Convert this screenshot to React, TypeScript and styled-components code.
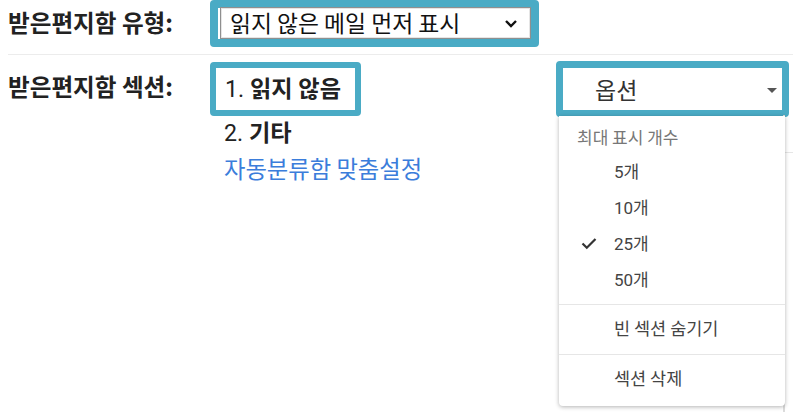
import React from "react";
import styled, { createGlobalStyle } from "styled-components";

const GlobalStyle = createGlobalStyle`
  html, body { margin: 0; padding: 0; background: #fff; }
  body { font-family: Roboto, "Noto Sans CJK KR", sans-serif; color: #222; }
  * { box-sizing: border-box; }
`;

const TEAL = "#4aabc5";

const Page = styled.div`
  width: 793px;
  height: 412px;
  padding-left: 8px;
  overflow: hidden;
  position: relative;
`;

const Row = styled.div<{ $h: number }>`
  display: flex;
  align-items: flex-start;
  min-height: ${(p) => p.$h}px;
`;

const Label = styled.div<{ $top: number }>`
  width: 202px;
  flex: none;
  padding-top: ${(p) => p.$top}px;
  font-family: "Noto Sans CJK KR", sans-serif;
  font-weight: 700;
  font-size: 23.6px;
  line-height: 24px;
  color: #222;
`;

const Highlight = styled.div<{ $b: number }>`
  border: ${(p) => p.$b}px solid ${TEAL};
  border-radius: 4px;
  background: #fff;
`;

const FakeSelect = styled.div`
  width: 311px;
  height: 32px;
  margin: -1px 0 0 2px;
  border: 1px solid #8f8f8f;
  box-shadow: inset 0 0 0 1px #e5e5e5;
  display: flex;
  align-items: center;
  justify-content: space-between;
  padding: 0 12px 0 9px;
  font-family: "Noto Sans CJK KR", sans-serif;
  font-size: 22.8px;
  line-height: 28px;
  color: #111;
`;

const Divider = styled.div`
  height: 1px;
  background: #ececec;
  margin: 7px 0 7px;
`;

const Sections = styled.div`
  flex: 1;
  display: flex;
  flex-direction: column;
  align-items: flex-start;
`;

const SectionItem = styled.div<{ $indent?: number; $mt?: number }>`
  font-family: Roboto, "Noto Sans CJK KR", sans-serif;
  font-size: 23.2px;
  line-height: 26px;
  color: #222;
  padding-left: ${(p) => p.$indent ?? 9}px;
  margin-top: ${(p) => p.$mt ?? 0}px;
  b { font-weight: 700; }
`;

const BoxedItem = styled(SectionItem)`
  padding: 8px 14px 8px 9px;
`;

const LinkText = styled.a`
  font-family: "Noto Sans CJK KR", sans-serif;
  font-size: 23.3px;
  line-height: 26px;
  color: #3b7ddb;
  text-decoration: none;
  padding-left: 14px;
  margin-top: 9px;
`;

const OptionsWrap = styled.div`
  position: relative;
  width: 233px;
  margin-right: 4px;
  flex: none;
  margin-top: -1px;
`;

const OptionsButton = styled.div`
  height: 56px;
  border: 7px solid ${TEAL};
  border-radius: 4px;
  display: flex;
  align-items: center;
  justify-content: space-between;
  padding: 0 5px 0 32px;
  font-family: "Noto Sans CJK KR", sans-serif;
  font-size: 23px;
  color: #333;
`;

const Caret = styled.span`
  width: 0;
  height: 0;
  border-left: 5px solid transparent;
  border-right: 5px solid transparent;
  border-top: 5px solid #555;
  margin-top: 2px;
`;

const Menu = styled.div`
  position: absolute;
  top: 55px;
  left: 3px;
  width: 226px;
  height: 290px;
  background: #fff;
  border-radius: 0 0 4px 4px;
  box-shadow: 0 1px 4px rgba(0, 0, 0, 0.3);
  padding-top: 8px;
  z-index: 2;
`;

const MenuHeader = styled.div`
  font-family: "Noto Sans CJK KR", sans-serif;
  font-size: 17px;
  line-height: 26px;
  color: #777;
  padding-left: 18px;
  margin-bottom: 4px;
`;

const MenuItem = styled.div`
  position: relative;
  font-family: Roboto, "Noto Sans CJK KR", sans-serif;
  font-size: 17px;
  height: 36px;
  line-height: 36px;
  color: #444;
  padding-left: 55px;
`;

const Check = styled.svg`
  position: absolute;
  left: 22px;
  top: 11px;
`;

const MenuSep = styled.div<{ $mt: number }>`
  height: 1px;
  background: #e6e6e6;
  margin-top: ${(p) => p.$mt}px;
`;

const MenuAction = styled.div`
  font-family: "Noto Sans CJK KR", sans-serif;
  font-size: 17.5px;
  height: 49px;
  line-height: 46px;
  color: #444;
  padding-left: 55px;
`;

const BackLine = styled.div`
  position: absolute;
  right: 8px;
  top: 115px;
  width: 2px;
  height: 297px;
  background: #dcdcdc;
  &::after {
    content: "";
    position: absolute;
    left: 2px;
    top: 37px;
    width: 8px;
    height: 1px;
    background: #e6e6e6;
  }
`;

export default function App() {
  return (
    <>
      <GlobalStyle />
      <Page>
        <Row $h={47}>
          <Label $top={10}>받은편지함 유형:</Label>
          <Highlight $b={8}>
            <FakeSelect>
              <span>읽지 않은 메일 먼저 표시</span>
              <svg width="14" height="9" viewBox="0 0 14 9">
                <path d="M2 2 L7 7 L12 2" fill="none" stroke="#111" strokeWidth="2.4" />
              </svg>
            </FakeSelect>
          </Highlight>
        </Row>
        <Divider />
        <Row $h={350}>
          <Label $top={12}>받은편지함 섹션:</Label>
          <Sections>
            <Highlight $b={6}>
              <BoxedItem>
                1. <b>읽지 않음</b>
              </BoxedItem>
            </Highlight>
            <SectionItem $indent={14} $mt={4}>
              2. <b>기타</b>
            </SectionItem>
            <LinkText href="#">자동분류함 맞춤설정</LinkText>
          </Sections>
          <OptionsWrap>
            <OptionsButton>
              <span>옵션</span>
              <Caret />
            </OptionsButton>
            <Menu>
              <MenuHeader>최대 표시 개수</MenuHeader>
              <MenuItem>5개</MenuItem>
              <MenuItem>10개</MenuItem>
              <MenuItem>
                <Check width="16" height="13" viewBox="0 0 16 13">
                  <path d="M1.5 6.5 L5.8 10.8 L14.5 2" fill="none" stroke="#333" strokeWidth="2.2" />
                </Check>
                25개
              </MenuItem>
              <MenuItem>50개</MenuItem>
              <MenuSep $mt={6} />
              <MenuAction>빈 섹션 숨기기</MenuAction>
              <MenuSep $mt={0} />
              <MenuAction>섹션 삭제</MenuAction>
            </Menu>
          </OptionsWrap>
        </Row>
        <BackLine />
      </Page>
    </>
  );
}
